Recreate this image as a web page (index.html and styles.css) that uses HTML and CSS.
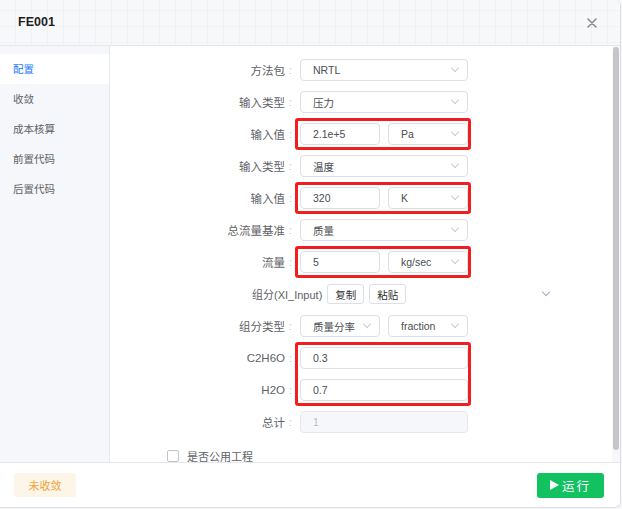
FILE: index.html
```html
<!DOCTYPE html>
<html lang="zh-CN">
<head>
    <meta charset="UTF-8">
    <title>FE001</title>
    <link rel="stylesheet" href="styles.css">
</head>
<body>

<div class="dialog">
    <div class="dialog-header">
        <span class="title">FE001</span>
        <span class="close">
            <svg width="10" height="10" viewBox="0 0 10 10"><path d="M1 1L9 9M9 1L1 9" stroke="#8c8c8c" stroke-width="1.6" stroke-linecap="round"/></svg>
        </span>
    </div>

    <div class="dialog-body">
        <ul class="side-nav">
            <li class="active">配置</li>
            <li>收敛</li>
            <li>成本核算</li>
            <li>前置代码</li>
            <li>后置代码</li>
        </ul>

        <div class="main">
            <div class="form">
                <span class="label">方法包</span><span class="colon">:</span>
                <div class="control"><div class="select">NRTL<i class="arrow"></i></div></div>

                <span class="label">输入类型</span><span class="colon">:</span>
                <div class="control"><div class="select">压力<i class="arrow"></i></div></div>

                <span class="label">输入值</span><span class="colon">:</span>
                <div class="control marked">
                    <div class="input">2.1e+5</div>
                    <div class="select">Pa<i class="arrow"></i></div>
                </div>

                <span class="label">输入类型</span><span class="colon">:</span>
                <div class="control"><div class="select">温度<i class="arrow"></i></div></div>

                <span class="label">输入值</span><span class="colon">:</span>
                <div class="control marked">
                    <div class="input">320</div>
                    <div class="select">K<i class="arrow"></i></div>
                </div>

                <span class="label">总流量基准</span><span class="colon">:</span>
                <div class="control"><div class="select">质量<i class="arrow"></i></div></div>

                <span class="label">流量</span><span class="colon">:</span>
                <div class="control marked">
                    <div class="input">5</div>
                    <div class="select">kg/sec<i class="arrow"></i></div>
                </div>

                <div class="group-head">
                    <span>组分(XI_Input)</span>
                    <button class="mini-btn">复制</button>
                    <button class="mini-btn">粘贴</button>
                    <i class="arrow group-arrow"></i>
                </div>

                <span class="label">组分类型</span><span class="colon">:</span>
                <div class="control">
                    <div class="select">质量分率<i class="arrow"></i></div>
                    <div class="select">fraction<i class="arrow"></i></div>
                </div>

                <span class="label">C2H6O</span><span class="colon">:</span>
                <div class="control marked marked-two"><div class="input">0.3</div></div>

                <span class="label">H2O</span><span class="colon">:</span>
                <div class="control"><div class="input">0.7</div></div>

                <span class="label">总计</span><span class="colon">:</span>
                <div class="control"><div class="input disabled">1</div></div>

                <label class="check-row"><span class="checkbox"></span>是否公用工程</label>
            </div>
        </div>

        <div class="scrollbar"><div class="thumb"></div></div>
    </div>

    <div class="dialog-footer">
        <button class="btn-warn">未收敛</button>
        <button class="btn-run"><span class="play"></span>运行</button>
    </div>
</div>

</body>
</html>
```

FILE: styles.css
```css
body {
    margin: 0;
    background-color: #f7f7f7;
    font-family: "Liberation Sans", "Noto Sans CJK SC", sans-serif;
    color: #606266;
}
.dialog {
    width: 620px;
    height: 507px;
    background-color: #fff;
    border-right: 1px solid #dcdfe6;
    border-bottom: 1px solid #dcdfe6;
    border-radius: 0 6px 6px 0;
    overflow: hidden;
    display: flex;
    flex-direction: column;
}
.dialog-header {
    height: 45px;
    flex: none;
    display: flex;
    align-items: center;
    justify-content: space-between;
    padding: 0 23px 0 18px;
    background-color: #f7f8fa;
    background-image:
        linear-gradient(rgba(0, 0, 0, 0.025) 1px, transparent 1px),
        linear-gradient(90deg, rgba(0, 0, 0, 0.025) 1px, transparent 1px);
    background-size: 16px 16px;
    background-position: -1px 10px;
    border-bottom: 1px solid #e4e7ed;
}
.title {
    font-size: 12.5px;
    font-weight: bold;
    color: #1f1f1f;
    margin-top: -2px;
}
.close {
    display: flex;
}
.dialog-body {
    height: 416px;
    flex: none;
    display: flex;
}
.side-nav {
    list-style: none;
    margin: 0;
    padding: 8px 0 0;
    width: 109px;
    flex: none;
    background-color: #f5f7fa;
    border-right: 1px solid #e4e7ed;
}
.side-nav li {
    height: 30px;
    line-height: 30px;
    padding-left: 13px;
    font-size: 10.5px;
    color: #606266;
}
.side-nav li.active {
    background-color: #fff;
    color: #1d7bff;
}
.main {
    flex: 1;
    overflow: hidden;
    padding-top: 13px;
}
.scrollbar {
    width: 8px;
    flex: none;
    background-color: #f7f7f7;
    padding: 1px 1px 0 1px;
    box-sizing: border-box;
}
.thumb {
    height: 403px;
    border-radius: 3px;
    background-color: #c6c6c6;
}
.form {
    display: grid;
    grid-template-columns: 175px 15px 168px 1fr;
    grid-auto-rows: 22px;
    row-gap: 10px;
    align-items: center;
}
.label {
    grid-column: 1;
    text-align: right;
    font-size: 11.5px;
    color: #5f6368;
}
.colon {
    padding-left: 4px;
    font-size: 11px;
    color: #c0c4cc;
}
.control {
    position: relative;
    display: flex;
    gap: 8px;
    height: 22px;
}
.marked::after {
    content: "";
    position: absolute;
    top: -5px;
    right: -3px;
    bottom: -5px;
    left: -5px;
    border: 3px solid #f01e1e;
    border-radius: 3px;
}
.marked-two::after {
    bottom: -37px;
}
.input,
.select {
    flex: 1;
    display: flex;
    align-items: center;
    box-sizing: border-box;
    height: 22px;
    padding: 0 9px 0 12px;
    border: 1px solid #dcdfe6;
    border-radius: 4px;
    font-size: 10.5px;
    color: #4a4d52;
    background-color: #fff;
}
.select {
    justify-content: space-between;
}
.input.disabled {
    background-color: #f5f7fa;
    border-color: #e4e7ed;
    color: #b8bcc4;
}
.arrow {
    width: 5px;
    height: 5px;
    border-right: 1px solid #c8cbd1;
    border-bottom: 1px solid #c8cbd1;
    transform: translateY(-2px) rotate(45deg);
}
.group-head {
    grid-column: 1 / -1;
    display: flex;
    align-items: center;
    gap: 5px;
    padding-left: 142px;
    padding-right: 63px;
    font-size: 11px;
    color: #606266;
}
.mini-btn {
    height: 20px;
    padding: 0 7px;
    border: 1px solid #dcdfe6;
    border-radius: 3px;
    background-color: #fff;
    font-family: inherit;
    font-size: 10.5px;
    color: #303133;
}
.group-arrow {
    margin-left: auto;
    border-color: #9fb0c8;
}
.check-row {
    grid-column: 1 / -1;
    display: flex;
    align-items: center;
    margin-top: 4px;
    padding-left: 57px;
    font-size: 11px;
    color: #606266;
}
.checkbox {
    width: 10px;
    height: 10px;
    border: 1px solid #c0c4cc;
    border-radius: 2px;
    margin-right: 8px;
}
.dialog-footer {
    flex: 1;
    display: flex;
    align-items: center;
    justify-content: space-between;
    padding: 0 16px 0 14px;
    border-top: 1px solid #e4e7ed;
}
.btn-warn {
    width: 62px;
    height: 24px;
    border: none;
    border-radius: 3px;
    background-color: #fdf5e8;
    font-family: inherit;
    font-size: 11px;
    color: #f0a43a;
}
.btn-run {
    width: 67px;
    height: 25px;
    display: flex;
    align-items: center;
    justify-content: center;
    border: none;
    border-radius: 3px;
    background-color: #12c160;
    font-family: inherit;
    font-size: 12.5px;
    letter-spacing: 2px;
    color: #fff;
}
.play {
    width: 0;
    height: 0;
    border-left: 9px solid #fff;
    border-top: 5.5px solid transparent;
    border-bottom: 5.5px solid transparent;
    margin-right: 3px;
}
```
